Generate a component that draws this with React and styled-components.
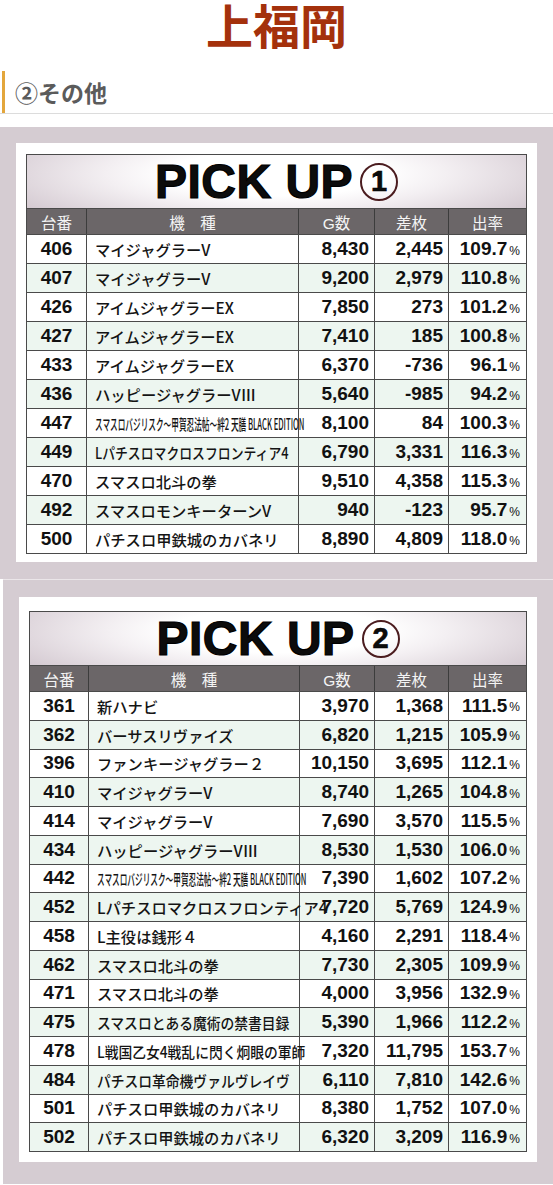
import React from "react";
import styled, { createGlobalStyle } from "styled-components";

const GlobalStyle = createGlobalStyle`
  html, body {
    margin: 0;
    padding: 0;
    background: #fff;
  }
  body {
    font-family: "Liberation Sans", "Noto Sans CJK JP", sans-serif;
    color: #111;
  }
  * {
    box-sizing: border-box;
  }
`;

const Page = styled.div`
  width: 553px;
  display: flex;
  flex-direction: column;
`;

const SiteTitle = styled.h1`
  margin: 0;
  height: 48px;
  font-family: "Noto Sans CJK JP", sans-serif;
  font-size: 47px;
  line-height: 47px;
  font-weight: 700;
  color: #a4310c;
  text-align: center;
`;

const SectionHeading = styled.div`
  margin-top: 23px;
  padding-left: 2px;
  border-bottom: 1px solid #dcdcdc;
`;

const HeadingText = styled.h2`
  margin: 0;
  height: 42px;
  border-left: 3px solid #e3a63c;
  padding-left: 10px;
  display: flex;
  align-items: center;
  font-family: "Noto Sans CJK JP", sans-serif;
  font-size: 23px;
  font-weight: 700;
  color: #5b5b5b;
`;

const Board = styled.section`
  margin-top: ${(p) => p.$mt}px;
  margin-left: ${(p) => p.$ml}px;
  padding: ${(p) => p.$pad};
  background: #d5ccd2;
  border-top: ${(p) => (p.$line ? "1px solid #ebe6e9" : "none")};
`;

const Card = styled.div`
  background: #fff;
  padding: ${(p) => p.$pad};
`;

const Table = styled.div`
  border: 1px solid #4a4a4a;
  display: flex;
  flex-direction: column;
`;

const TitleBox = styled.div`
  height: 53px;
  display: flex;
  align-items: center;
  justify-content: center;
  background: radial-gradient(
    ellipse 62% 120% at 50% 35%,
    #ffffff 35%,
    #f3eff2 55%,
    #d2c7cf 100%
  );
`;

const PickText = styled.span`
  font-family: "Liberation Sans", sans-serif;
  font-size: 48px;
  font-weight: 700;
  color: #0c0c0c;
  -webkit-text-stroke: 1.2px #000;
  letter-spacing: 0.5px;
  line-height: 1;
`;

const Circled = styled.span`
  margin-left: 7px;
  width: 38px;
  height: 38px;
  border: 2.5px solid #4b1c1f;
  border-radius: 50%;
  display: inline-flex;
  align-items: center;
  justify-content: center;
  font-family: "Liberation Sans", sans-serif;
  font-size: 29px;
  font-weight: 700;
  color: #0c0c0c;
  -webkit-text-stroke: 0.6px #000;
  line-height: 1;
`;

const Row = styled.div`
  display: grid;
  grid-template-columns: ${(p) => p.$cols};
  height: ${(p) => p.$h}px;
  border-top: 1px solid #4a4a4a;
  background: ${(p) => p.$bg};
`;

const HeadCell = styled.div`
  display: flex;
  align-items: center;
  justify-content: center;
  border-left: 1px solid #3c3c3c;
  font-family: "Liberation Sans", "Noto Sans CJK JP", sans-serif;
  font-size: 15.5px;
  color: #f4f4f4;
  white-space: pre;
  &:first-child {
    border-left: none;
  }
`;

const Cell = styled.div`
  display: flex;
  align-items: center;
  justify-content: ${(p) => p.$align || "flex-end"};
  padding: ${(p) => p.$pad || "0 5px 0 0"};
  border-left: 1px solid #4a4a4a;
  font-size: 19px;
  font-weight: 700;
  color: #111;
  white-space: nowrap;
  overflow: visible;
  &:first-child {
    border-left: none;
  }
`;

const NameText = styled.span`
  display: inline-block;
  font-family: "Noto Sans CJK JP", sans-serif;
  font-size: ${(p) => p.$size}px;
  font-weight: 500;
  color: #141414;
  white-space: nowrap;
  transform: scaleX(${(p) => p.$fit || 1});
  transform-origin: left center;
`;

const Percent = styled.span`
  font-size: 12px;
  font-weight: 400;
  margin-left: 2px;
  margin-top: 3px;
`;

const BASILISK = "スマスロバジリスク～甲賀忍法帖～絆2 天膳 BLACK EDITION";

const pickup1 = [
  ["406", "マイジャグラーV", "8,430", "2,445", "109.7"],
  ["407", "マイジャグラーV", "9,200", "2,979", "110.8"],
  ["426", "アイムジャグラーEX", "7,850", "273", "101.2"],
  ["427", "アイムジャグラーEX", "7,410", "185", "100.8"],
  ["433", "アイムジャグラーEX", "6,370", "-736", "96.1"],
  ["436", "ハッピージャグラーVⅢ", "5,640", "-985", "94.2"],
  ["447", BASILISK, "8,100", "84", "100.3", 0.5],
  ["449", "Lパチスロマクロスフロンティア4", "6,790", "3,331", "116.3", 0.84],
  ["470", "スマスロ北斗の拳", "9,510", "4,358", "115.3"],
  ["492", "スマスロモンキーターンV", "940", "-123", "95.7"],
  ["500", "パチスロ甲鉄城のカバネリ", "8,890", "4,809", "118.0"],
];

const pickup2 = [
  ["361", "新ハナビ", "3,970", "1,368", "111.5"],
  ["362", "バーサスリヴァイズ", "6,820", "1,215", "105.9"],
  ["396", "ファンキージャグラー２", "10,150", "3,695", "112.1"],
  ["410", "マイジャグラーV", "8,740", "1,265", "104.8"],
  ["414", "マイジャグラーV", "7,690", "3,570", "115.5"],
  ["434", "ハッピージャグラーVⅢ", "8,530", "1,530", "106.0"],
  ["442", BASILISK, "7,390", "1,602", "107.2", 0.5],
  ["452", "Lパチスロマクロスフロンティア4", "7,720", "5,769", "124.9"],
  ["458", "L主役は銭形４", "4,160", "2,291", "118.4"],
  ["462", "スマスロ北斗の拳", "7,730", "2,305", "109.9"],
  ["471", "スマスロ北斗の拳", "4,000", "3,956", "132.9"],
  ["475", "スマスロとある魔術の禁書目録", "5,390", "1,966", "112.2", 0.9],
  ["478", "L戦国乙女4戦乱に閃く炯眼の軍師", "7,320", "11,795", "153.7", 0.9],
  ["484", "パチスロ革命機ヴァルヴレイヴ", "6,110", "7,810", "142.6", 0.9],
  ["501", "パチスロ甲鉄城のカバネリ", "8,380", "1,752", "107.0"],
  ["502", "パチスロ甲鉄城のカバネリ", "6,320", "3,209", "116.9"],
];

const PickupTable = ({ num, rows, cols, rowH, nameSize }) => (
  <Table>
    <TitleBox>
      <PickText>PICK UP</PickText>
      <Circled>{num}</Circled>
    </TitleBox>
    <Row $cols={cols} $h={26} $bg="#6b6668">
      <HeadCell>台番</HeadCell>
      <HeadCell>{"機　種"}</HeadCell>
      <HeadCell>G数</HeadCell>
      <HeadCell>差枚</HeadCell>
      <HeadCell>出率</HeadCell>
    </Row>
    {rows.map(([no, name, games, diff, rate, fit], i) => (
      <Row key={no} $cols={cols} $h={rowH} $bg={i % 2 ? "#edf6f0" : "#fff"}>
        <Cell $align="center" $pad="0">
          {no}
        </Cell>
        <Cell $align="flex-start" $pad="0 0 0 8px">
          <NameText $size={nameSize} $fit={fit}>
            {name}
          </NameText>
        </Cell>
        <Cell>{games}</Cell>
        <Cell>{diff}</Cell>
        <Cell $pad="0 6px 0 0">
          {rate}
          <Percent>%</Percent>
        </Cell>
      </Row>
    ))}
  </Table>
);

const App = () => {
  return (
    <Page>
      <GlobalStyle />
      <SiteTitle>上福岡</SiteTitle>
      <SectionHeading>
        <HeadingText>②その他</HeadingText>
      </SectionHeading>
      <Board $mt={13} $ml={0} $pad="16px 16px 17px 16px">
        <Card $pad="11px 10px 8px 10px">
          <PickupTable
            num="1"
            rows={pickup1}
            cols="59px 212px 76px 74px 1fr"
            rowH={29}
            nameSize={15.3}
          />
        </Card>
      </Board>
      <Board $mt={0} $ml={3} $pad="17px 16px 22px 16px" $line>
        <Card $pad="14px 10px 10px 10px">
          <PickupTable
            num="2"
            rows={pickup2}
            cols="58px 211px 75px 74px 1fr"
            rowH={28.75}
            nameSize={15.3}
          />
        </Card>
      </Board>
    </Page>
  );
};

export default App;
